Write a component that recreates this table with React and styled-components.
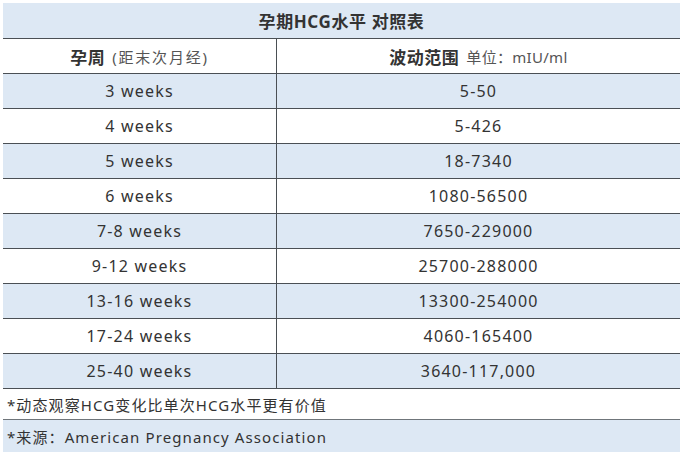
import React from 'react'
import styled, { createGlobalStyle } from 'styled-components'

const Global = createGlobalStyle`
  html, body {
    margin: 0;
    padding: 0;
    background: #fff;
  }
  body {
    font-family: "Noto Sans", "Noto Sans CJK SC", sans-serif;
    color: #333;
  }
`

const Page = styled.div`
  width: 685px;
  height: 454px;
  box-sizing: border-box;
  padding: 3px 5px 2px 3px;
`

const Table = styled.div`
  display: flex;
  flex-direction: column;
`

const Title = styled.div`
  height: 36px;
  box-sizing: border-box;
  background: #dde8f4;
  border-bottom: 1.5px solid #4a4f54;
  display: flex;
  align-items: center;
  justify-content: center;
  font-size: 17px;
  font-weight: 700;
  letter-spacing: 0.6px;
`

const Row = styled.div`
  display: grid;
  grid-template-columns: 273px 1fr;
  height: 35px;
  box-sizing: border-box;
  background: ${p => (p.$shade ? '#dde8f4' : '#fff')};
  border-bottom: 1.5px solid #4a4f54;
`

const Cell = styled.div`
  display: flex;
  align-items: center;
  justify-content: center;
  font-size: 16px;
  letter-spacing: 1.2px;
  color: #333;
  & + & {
    border-left: 1.5px solid #4a4f54;
  }
`

const HeadCell = styled(Cell)`
  letter-spacing: 0;
  gap: 7px;
  b {
    font-size: 17px;
    font-weight: 700;
    letter-spacing: 0.5px;
  }
`

const Sub = styled.span`
  font-size: ${p => p.$size}px;
  letter-spacing: ${p => p.$spacing}px;
  color: #555;
`

const Note = styled.div`
  height: ${p => p.$h}px;
  box-sizing: border-box;
  display: flex;
  align-items: center;
  padding-left: 4px;
  font-size: 15px;
  letter-spacing: 1.1px;
  background: ${p => (p.$shade ? '#dde8f4' : '#fff')};
  border-bottom: ${p => (p.$line ? '1.5px solid #6f757a' : 'none')};
`

const data = [
  ['3 weeks', '5-50'],
  ['4 weeks', '5-426'],
  ['5 weeks', '18-7340'],
  ['6 weeks', '1080-56500'],
  ['7-8 weeks', '7650-229000'],
  ['9-12 weeks', '25700-288000'],
  ['13-16 weeks', '13300-254000'],
  ['17-24 weeks', '4060-165400'],
  ['25-40 weeks', '3640-117,000'],
]

export default function App() {
  return (
    <Page>
      <Global />
      <Table>
        <Title>孕期HCG水平 对照表</Title>
        <Row>
          <HeadCell>
            <b>孕周</b>
            <Sub $size={15} $spacing={1.8}>(距末次月经)</Sub>
          </HeadCell>
          <HeadCell>
            <b>波动范围</b>
            <Sub $size={15} $spacing={0.3}>单位：mIU/ml</Sub>
          </HeadCell>
        </Row>
        {data.map(([week, range], i) => (
          <Row key={week} $shade={i % 2 === 0}>
            <Cell>{week}</Cell>
            <Cell>{range}</Cell>
          </Row>
        ))}
        <Note $h={31} $line>*动态观察HCG变化比单次HCG水平更有价值</Note>
        <Note $h={32} $shade>*来源：American Pregnancy Association</Note>
      </Table>
    </Page>
  )
}
